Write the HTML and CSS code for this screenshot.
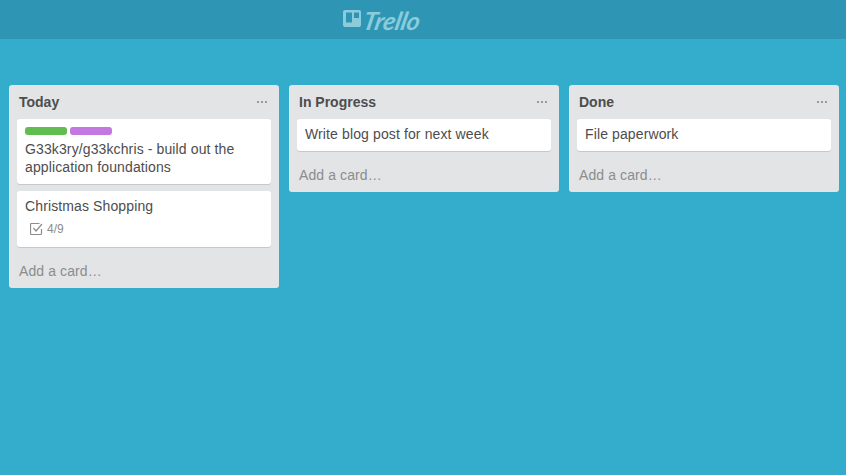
FILE: index.html
```html
<!DOCTYPE html>
<html>
<head>
    <link rel="stylesheet" href="styles.css">
</head>
<body>
    <div class="header-bar">
        <div class="logo">
            <svg class="logo-mark" width="18" height="17" viewBox="0 0 18 17">
                <path fill-rule="evenodd" d="M2 0h14a2 2 0 0 1 2 2v13a2 2 0 0 1-2 2H2a2 2 0 0 1-2-2V2a2 2 0 0 1 2-2zM3 2.500v10h6v-10zM11 2.500v5.500h5v-5.500z"/>
            </svg>
            <span class="logo-text">Trello</span>
        </div>
    </div>

    <div class="board">
        <div class="list">
            <div class="list-header">
                <span class="list-title">Today</span>
                <svg class="list-menu" width="10" height="2" viewBox="0 0 10 2">
                    <rect width="2" height="2"/><rect x="4" width="2" height="2"/><rect x="8" width="2" height="2"/>
                </svg>
            </div>
            <div class="card">
                <div class="labels">
                    <span class="label label-green"></span>
                    <span class="label label-purple"></span>
                </div>
                <div class="card-title">G33k3ry/g33kchris - build out the application foundations</div>
            </div>
            <div class="card">
                <div class="card-title">Christmas Shopping</div>
                <div class="badges">
                    <svg class="badge-icon" width="14" height="14" viewBox="0 0 14 14">
                        <path d="M11.500 7v4.500a1 1 0 0 1-1 1h-9a1 1 0 0 1-1-1v-9a1 1 0 0 1 1-1h8" fill="none"/>
                        <path d="M3.500 6l2.500 3 6-7" fill="none"/>
                    </svg>
                    <span class="badge-text">4/9</span>
                </div>
            </div>
            <div class="add-card">Add a card&hellip;</div>
        </div>

        <div class="list">
            <div class="list-header">
                <span class="list-title">In Progress</span>
                <svg class="list-menu" width="10" height="2" viewBox="0 0 10 2">
                    <rect width="2" height="2"/><rect x="4" width="2" height="2"/><rect x="8" width="2" height="2"/>
                </svg>
            </div>
            <div class="card">
                <div class="card-title">Write blog post for next week</div>
            </div>
            <div class="add-card">Add a card&hellip;</div>
        </div>

        <div class="list">
            <div class="list-header">
                <span class="list-title">Done</span>
                <svg class="list-menu" width="10" height="2" viewBox="0 0 10 2">
                    <rect width="2" height="2"/><rect x="4" width="2" height="2"/><rect x="8" width="2" height="2"/>
                </svg>
            </div>
            <div class="card">
                <div class="card-title">File paperwork</div>
            </div>
            <div class="add-card">Add a card&hellip;</div>
        </div>
    </div>
</body>
</html>
```

FILE: styles.css
```css
body {
    margin: 0;
    height: 475px;
    overflow: hidden;
    background: #34adcd;
    font-family: "Liberation Sans", Arial, sans-serif;
    font-size: 14px;
    line-height: 18px;
    color: #4d4d4d;
}

.header-bar {
    height: 39px;
    background: #2e96b4;
    display: flex;
    align-items: center;
    padding-left: 343px;
}

.logo {
    display: flex;
    align-items: center;
    gap: 3px;
    color: #8accdb;
}

.logo-mark {
    fill: #8accdb;
    margin-bottom: 2px;
}

.logo-text {
    font-family: "Lato", sans-serif;
    font-style: italic;
    font-weight: bold;
    font-size: 25px;
    line-height: 30px;
    letter-spacing: -0.2px;
    transform: skewX(-12deg);
}

.board {
    display: flex;
    align-items: flex-start;
    gap: 10px;
    padding: 46px 0 0 9px;
}

.list {
    width: 270px;
    background: #e2e4e6;
    border-radius: 3px;
    padding: 0 8px;
    box-sizing: border-box;
}

.list-header {
    display: flex;
    justify-content: space-between;
    align-items: center;
    height: 34px;
    padding: 0 4px 0 2px;
}

.list-title {
    font-weight: bold;
    color: #4d4d4d;
}

.list-menu {
    fill: #999;
}

.card {
    background: white;
    border-radius: 3px;
    box-shadow: 0 1px 0 #c4c9cc;
    padding: 6px 8px 8px;
    margin-bottom: 7px;
}

.card-title {
    letter-spacing: 0.12px;
}

.labels {
    display: flex;
    gap: 3px;
    margin: 2px 0 5px;
}

.label {
    width: 42px;
    height: 8px;
    border-radius: 3px;
}

.label-green {
    background: #61bd4f;
}

.label-purple {
    background: #c377e0;
}

.badges {
    display: flex;
    align-items: center;
    gap: 3px;
    height: 20px;
    margin-top: 4px;
    padding-left: 5px;
}

.badge-icon path {
    stroke: #8c8c8c;
    stroke-width: 1.200;
}

.badge-text {
    font-size: 12px;
    color: #8c8c8c;
}

.add-card {
    padding: 7px 2px 8px;
    margin-top: 8px;
    color: #8c8c8c;
    letter-spacing: 0.1px;
}
```
